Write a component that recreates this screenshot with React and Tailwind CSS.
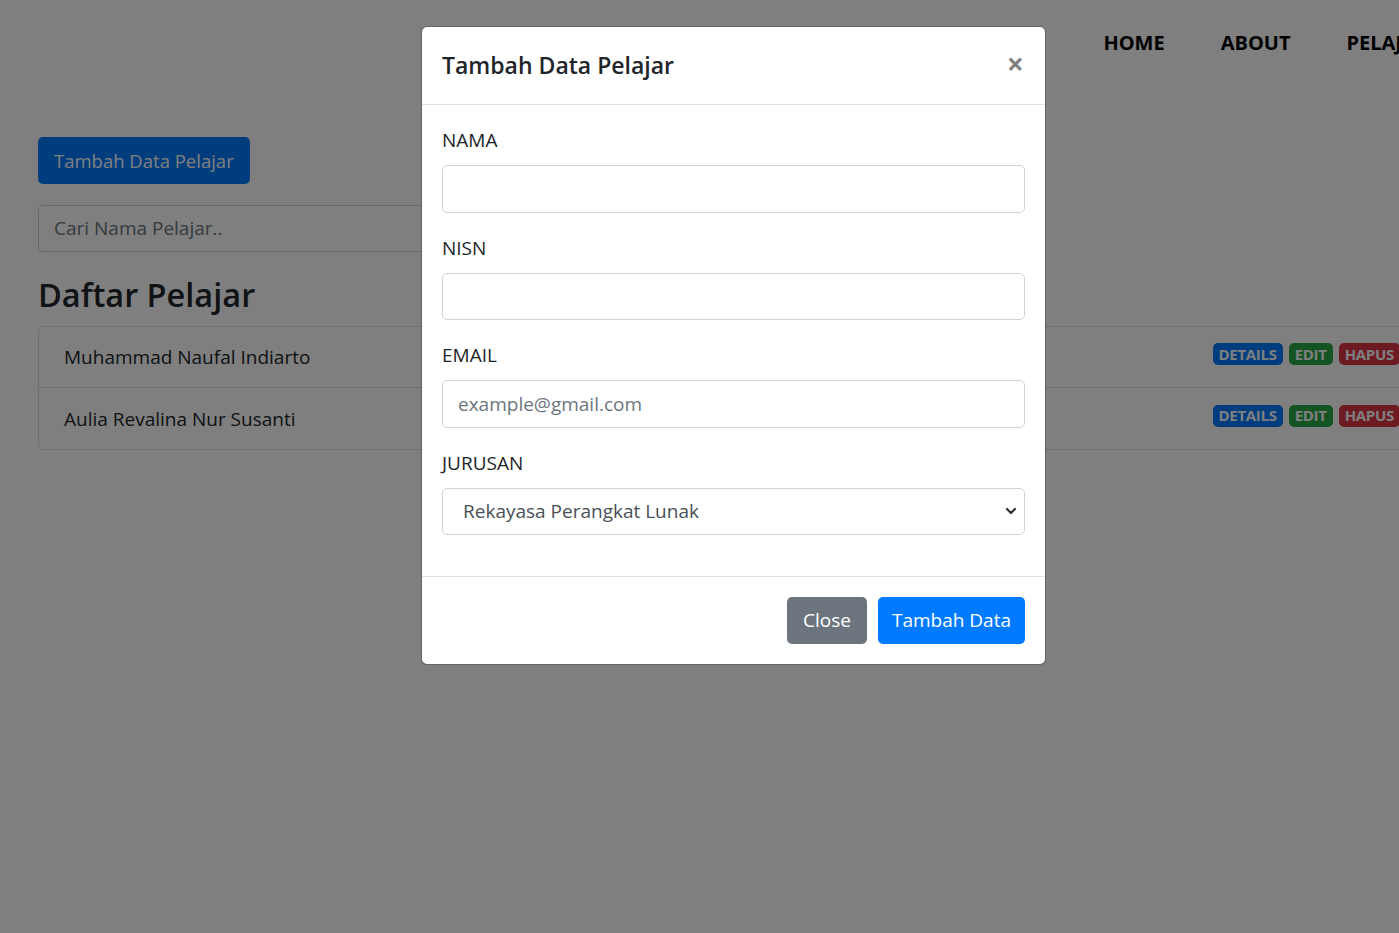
import React from "react";

function Badge({ children, className }) {
  return (
    <span
      className={
        "inline-flex h-[22px] items-center rounded-[5px] px-[6px] text-[15px] font-bold leading-none text-white tracking-[-0.3px] " +
        className
      }
    >
      {children}
    </span>
  );
}

function Row({ name, last }) {
  return (
    <div
      className={
        "flex h-[61px] items-center justify-between pl-[25px] pr-[25px] " +
        (last ? "" : "border-b border-black/[0.125]")
      }
    >
      <span className="text-[19px] leading-[30px] text-[#212529]">{name}</span>
      <div className="mb-[6px] flex gap-[6px]">
        <Badge className="bg-[#007bff]">DETAILS</Badge>
        <Badge className="bg-[#28a745]">EDIT</Badge>
        <Badge className="bg-[#dc3545]">HAPUS</Badge>
      </div>
    </div>
  );
}

function Field({ label, children }) {
  return (
    <div className="mb-[20px] flex flex-col">
      <label className="mb-[10px] text-[19px] leading-[30px] text-[#212529]">{label}</label>
      {children}
    </div>
  );
}

export default function App() {
  const font = "font-['Open_Sans','Noto_Sans',sans-serif]";
  return (
    <div className={"relative h-[933px] w-[1399px] overflow-hidden bg-white " + font}>
      {/* page underneath */}
      <div className="flex w-[1560px] justify-end pt-[29px]">
        <nav className="flex gap-[56px] pr-[131px] text-[20px] font-bold leading-[28px] text-black">
          <span>HOME</span>
          <span>ABOUT</span>
          <span>PELAJAR</span>
        </nav>
      </div>
      <div className="flex flex-col items-start pl-[38px] pt-[80px]">
        <button className="h-[47px] rounded-[5px] bg-[#007bff] px-[16px] text-[18.5px] text-white">
          Tambah Data Pelajar
        </button>
        <div className="mt-[21px] flex h-[47px] w-[640px] items-center rounded-[5px] border border-[#ced4da] px-[15px] text-[19px] text-[#6c757d]">
          Cari Nama Pelajar..
        </div>
        <h3 className="mt-[22px] mb-[10px] text-[32.5px] font-semibold leading-[42px] text-[#212529]">
          Daftar Pelajar
        </h3>
        <div className="w-[1388px] rounded-[5px] border border-black/[0.125]">
          <Row name="Muhammad Naufal Indiarto" />
          <Row name="Aulia Revalina Nur Susanti" last />
        </div>
      </div>

      {/* backdrop */}
      <div className="absolute inset-0 bg-black/50" />

      {/* modal */}
      <div className="absolute left-[421px] top-[26px] w-[625px] rounded-[6px] border border-black/20 bg-white bg-clip-padding">
        <div className="flex items-center justify-between border-b border-[#dee2e6] px-[20px] pb-[20px] pt-[20px]">
          <h5 className="text-[23px] font-semibold leading-[37px] text-[#212529]">Tambah Data Pelajar</h5>
          <span className="mr-[1px] -mt-[3px] text-[30px] font-bold leading-none text-black/50">×</span>
        </div>
        <div className="px-[20px] pt-[20px] pb-[21px]">
          <Field label="NAMA">
            <div className="h-[47.5px] rounded-[5px] border border-[#ced4da]" />
          </Field>
          <Field label="NISN">
            <div className="h-[47.5px] rounded-[5px] border border-[#ced4da]" />
          </Field>
          <Field label="EMAIL">
            <div className="flex h-[47.5px] items-center rounded-[5px] border border-[#ced4da] px-[15px] text-[19px] text-[#6c757d]">
              example@gmail.com
            </div>
          </Field>
          <Field label="JURUSAN">
            <div className="flex h-[47.5px] items-center justify-between rounded-[5px] border border-[#ced4da] pl-[20px] pr-[6px] text-[19px] text-[#495057]">
              <span>Rekayasa Perangkat Lunak</span>
              <svg width="14" height="14" viewBox="0 0 14 14">
                <path d="M3 5 L7 9 L11 5" fill="none" stroke="#333" strokeWidth="2.2" strokeLinecap="round" strokeLinejoin="round" />
              </svg>
            </div>
          </Field>
        </div>
        <div className="flex justify-end gap-[11px] border-t border-[#dee2e6] px-[20px] pt-[20px] pb-[20px]">
          <button className="h-[47px] rounded-[5px] bg-[#6c757d] px-[16px] text-[19px] text-white">Close</button>
          <button className="h-[47px] rounded-[5px] bg-[#007bff] px-[14px] text-[19px] text-white">Tambah Data</button>
        </div>
      </div>
    </div>
  );
}
